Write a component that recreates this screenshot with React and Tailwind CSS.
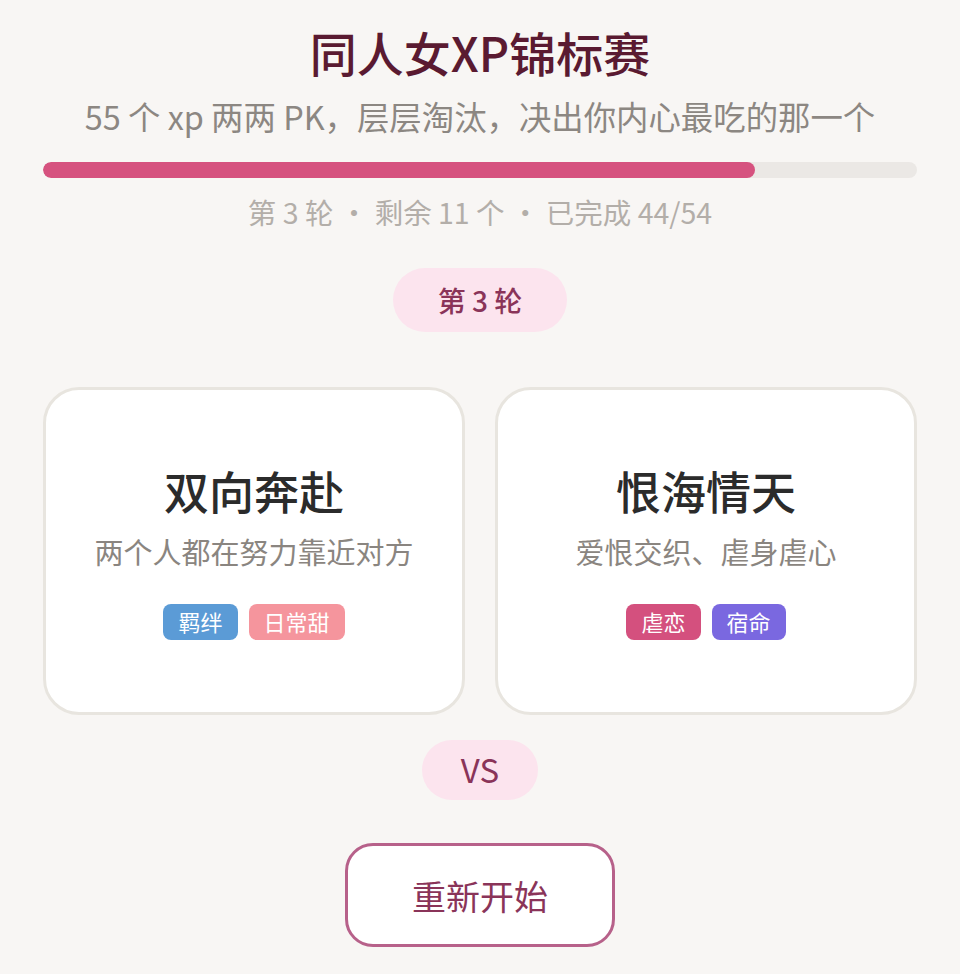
import React from 'react'

const cards = [
  {
    title: '双向奔赴',
    desc: '两个人都在努力靠近对方',
    tags: [
      { label: '羁绊', cls: 'bg-[#5b9bd6]' },
      { label: '日常甜', cls: 'bg-[#f5959d]' },
    ],
  },
  {
    title: '恨海情天',
    desc: '爱恨交织、虐身虐心',
    tags: [
      { label: '虐恋', cls: 'bg-[#d4507e]' },
      { label: '宿命', cls: 'bg-[#7a68e0]' },
    ],
  },
]

const done = 44
const total = 54

export default function App() {
  return (
    <div
      className="min-h-[974px] bg-[#f8f6f4] px-[43px] pt-[22px] flex flex-col items-center"
      style={{ fontFamily: '"Noto Sans CJK SC", "Noto Sans", sans-serif' }}
    >
      <h1 className="text-[47px] leading-[60px] font-medium text-[#5a1a31]">同人女XP锦标赛</h1>
      <p className="mt-[14px] text-[32.4px] leading-[40px] text-[#8c8782]">
        55 个 xp 两两 PK，层层淘汰，决出你内心最吃的那一个
      </p>

      {/* progress */}
      <div className="mt-[26px] w-full h-[16px] rounded-full bg-[#ebe8e5] overflow-hidden">
        <div className="h-full rounded-full bg-[#d6527f]" style={{ width: `${(done / total) * 100}%` }} />
      </div>
      <p className="mt-[16px] text-[28.5px] leading-[36px] text-[#b3aea9]">
        第 3 轮 · 剩余 11 个 · 已完成 {done}/{total}
      </p>

      <div className="mt-[38px] w-[174px] h-[64px] rounded-full bg-[#fce4ee] flex items-center justify-center text-[28px] font-medium text-[#8a3459]">
        第 3 轮
      </div>

      {/* matchup */}
      <div className="mt-[55px] w-full grid grid-cols-2 gap-[30px]">
        {cards.map((c) => (
          <div
            key={c.title}
            className="h-[328px] rounded-[36px] border-[3px] border-[#e8e5df] bg-white flex flex-col items-center justify-center"
          >
            <div className="text-[45px] leading-[56px] font-medium text-[#2b2b2b]">{c.title}</div>
            <div className="mt-[12px] text-[29px] leading-[40px] text-[#8a8580]">{c.desc}</div>
            <div className="mt-[33px] flex gap-[11px]">
              {c.tags.map((t) => (
                <span
                  key={t.label}
                  className={`h-[36px] px-[15px] rounded-[8px] flex items-center text-[22px] text-white ${t.cls}`}
                >
                  {t.label}
                </span>
              ))}
            </div>
          </div>
        ))}
      </div>

      <div className="mt-[25px] w-[116px] h-[60px] rounded-full bg-[#fce4ee] flex items-center justify-center text-[33px] text-[#8a3459]">
        VS
      </div>

      <button className="mt-[43px] w-[270px] h-[104px] rounded-[28px] border-[3px] border-[#b7618a] bg-white text-[34px] text-[#8a3459]">
        重新开始
      </button>
    </div>
  )
}
